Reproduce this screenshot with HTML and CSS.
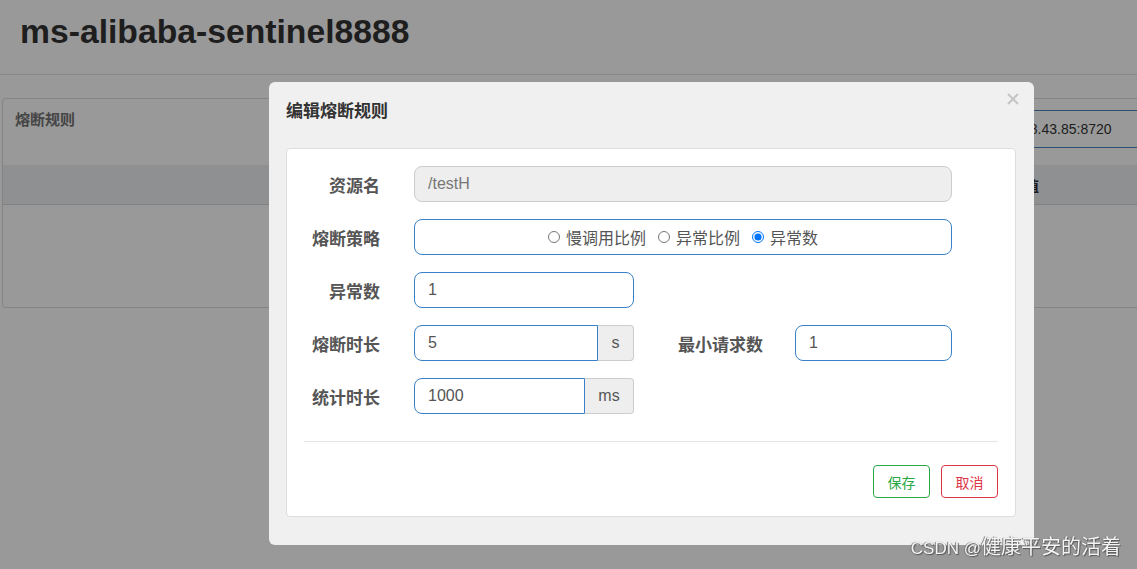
FILE: index.html
```html
<!DOCTYPE html>
<html lang="zh-CN">
<head>
    <meta charset="UTF-8">
    <meta name="viewport" content="width=device-width, initial-scale=1.0">
    <title>ms-alibaba-sentinel8888</title>
    <link rel="stylesheet" href="styles.css">
</head>
<body>
    <!-- Página de fondo -->
    <div class="page">
        <header class="top-bar">
            <h1>ms-alibaba-sentinel8888</h1>
        </header>

        <div class="rule-panel">
            <div class="rule-panel-head">
                <span class="rule-title">熔断规则</span>
                <input class="search" type="text" value="192.168.43.85:8720">
            </div>
            <div class="rule-thead">
                <span></span>
                <span></span>
                <span></span>
                <span></span>
                <span>阈值</span>
            </div>
            <div class="rule-body"></div>
        </div>
    </div>

    <div class="backdrop"></div>

    <!-- Diálogo de edición -->
    <div class="modal">
        <h2 class="modal-title">编辑熔断规则</h2>
        <span class="close-btn">
            <svg width="12" height="12" viewBox="0 0 12 12">
                <path d="M1 1 L11 11 M11 1 L1 11" stroke="#c4c4c4" stroke-width="2" fill="none"/>
            </svg>
        </span>

        <form class="rule-form">
            <div class="form-row">
                <label class="form-label">资源名</label>
                <input class="field wide disabled" type="text" value="/testH" disabled>
            </div>

            <div class="form-row">
                <label class="form-label">熔断策略</label>
                <div class="field wide radio-box">
                    <label class="radio"><input type="radio" name="grade">慢调用比例</label>
                    <label class="radio"><input type="radio" name="grade">异常比例</label>
                    <label class="radio"><input type="radio" name="grade" checked>异常数</label>
                </div>
            </div>

            <div class="form-row">
                <label class="form-label">异常数</label>
                <input class="field half" type="text" value="1">
            </div>

            <div class="form-row">
                <label class="form-label">熔断时长</label>
                <div class="input-group">
                    <input class="field" type="text" value="5">
                    <span class="addon addon-s">s</span>
                </div>
                <label class="form-label second">最小请求数</label>
                <input class="field small" type="text" value="1">
            </div>

            <div class="form-row">
                <label class="form-label">统计时长</label>
                <div class="input-group">
                    <input class="field" type="text" value="1000">
                    <span class="addon addon-ms">ms</span>
                </div>
            </div>

            <hr class="form-divider">

            <div class="form-actions">
                <button type="button" class="btn btn-save">保存</button>
                <button type="button" class="btn btn-cancel">取消</button>
            </div>
        </form>
    </div>

    <div class="watermark"><span class="wm-latin">CSDN @</span><span class="wm-cjk">健康平安的活着</span></div>
</body>
</html>
```

FILE: styles.css
```css
body {
    margin: 0;
    height: 569px;
    overflow: hidden;
    font-family: "Liberation Sans", "Noto Sans CJK SC", sans-serif;
    background-color: #ffffff;
    color: #333;
}

.top-bar {
    padding: 11px 0 23px 20px;
    border-bottom: 1px solid #e5e5e5;
}

.top-bar h1 {
    margin: 0;
    font-size: 33.7px;
    line-height: 40px;
    font-weight: bold;
    color: #333;
}

.rule-panel {
    margin: 23px 0 0 2px;
    width: 1175px;
    box-sizing: border-box;
    border: 1px solid #ddd;
    border-radius: 4px;
}

.rule-panel-head {
    display: flex;
    align-items: flex-start;
    padding: 11px 12px 17px;
}

.rule-title {
    font-size: 15px;
    line-height: 20px;
    font-weight: bold;
    color: #747474;
}

.search {
    margin-left: auto;
    width: 190px;
    height: 38px;
    box-sizing: border-box;
    border: 1px solid #4985bb;
    border-radius: 4px;
    padding: 0 12px;
    font: 14px "Liberation Sans", sans-serif;
    color: #333;
}

.rule-thead {
    display: grid;
    grid-template-columns: 300px 240px 240px 220px 1fr;
    align-items: center;
    height: 39px;
    background-color: #eef0f3;
    border-bottom: 1px solid #d5d5d5;
    font-size: 14px;
    font-weight: bold;
}

.rule-thead span {
    padding-left: 8px;
}

.rule-body {
    height: 102px;
}

.backdrop {
    position: fixed;
    inset: 0;
    background-color: rgba(0, 0, 0, 0.4);
}

.modal {
    position: fixed;
    left: 269px;
    top: 82px;
    width: 765px;
    box-sizing: border-box;
    padding: 18px 18px 28px 17px;
    background-color: #f0f0f0;
    border-radius: 6px;
}

.modal-title {
    margin: 0 0 24px;
    font-size: 17px;
    line-height: 24px;
    font-weight: bold;
    color: #333;
}

.close-btn {
    position: absolute;
    top: 11px;
    right: 15px;
    width: 12px;
    height: 12px;
    line-height: 0;
}

.rule-form {
    background-color: #fff;
    border: 1px solid #ddd;
    border-radius: 4px;
    padding: 17px 17px 18px;
    margin: 0;
}

.form-row {
    display: flex;
    align-items: center;
    height: 36px;
    margin-bottom: 17px;
}

.form-row:nth-last-of-type(1) {
    margin-bottom: 0;
}

.form-label {
    width: 76px;
    margin-right: 34px;
    text-align: right;
    white-space: nowrap;
    font-size: 17px;
    font-weight: bold;
    color: #555;
}

.form-label.second {
    width: 129px;
    margin-right: 32px;
}

.field {
    height: 36px;
    box-sizing: border-box;
    border: 1px solid #3a80c6;
    border-radius: 8px;
    padding: 0 13px;
    font: 16px "Liberation Sans", "Noto Sans CJK SC", sans-serif;
    color: #555;
    background-color: #fff;
    outline: none;
}

.field.wide {
    width: 538px;
}

.field.half {
    width: 220px;
}

.field.small {
    width: 157px;
}

.field.disabled {
    background-color: #eee;
    border-color: #ccc;
    color: #777;
}

.radio-box {
    display: flex;
    justify-content: center;
    align-items: center;
    gap: 12px;
}

.radio {
    display: flex;
    align-items: center;
    color: #555;
}

.radio input {
    width: 12px;
    height: 12px;
    margin: 0 6px 0 0;
}

.input-group {
    display: flex;
    width: 220px;
}

.input-group .field {
    flex: 1;
    min-width: 0;
    border-radius: 8px 0 0 8px;
}

.addon {
    display: flex;
    align-items: center;
    justify-content: center;
    height: 36px;
    box-sizing: border-box;
    border: 1px solid #ccc;
    border-left: none;
    border-radius: 0 4px 4px 0;
    background-color: #eee;
    color: #555;
    font-size: 16px;
}

.addon-s {
    width: 36px;
}

.addon-ms {
    width: 49px;
}

.form-divider {
    border: 0;
    border-top: 1px solid #e5e5e5;
    margin: 27px 0 23px;
}

.form-actions {
    display: flex;
    justify-content: flex-end;
    gap: 11px;
}

.btn {
    width: 57px;
    height: 33px;
    padding: 0;
    background-color: #fff;
    border: 1px solid;
    border-radius: 4px;
    font: 14px "Liberation Sans", "Noto Sans CJK SC", sans-serif;
}

.btn-save {
    color: #28a745;
    border-color: #28a745;
}

.btn-cancel {
    color: #dc3545;
    border-color: #dc3545;
}

.watermark {
    position: fixed;
    right: 16px;
    bottom: 9px;
    color: #f4f4f4;
    text-shadow: 1px 1px 1px #555, -1px 0 1px #777;
    white-space: nowrap;
}

.wm-latin {
    font-size: 17px;
}

.wm-cjk {
    font-size: 20px;
}
```
